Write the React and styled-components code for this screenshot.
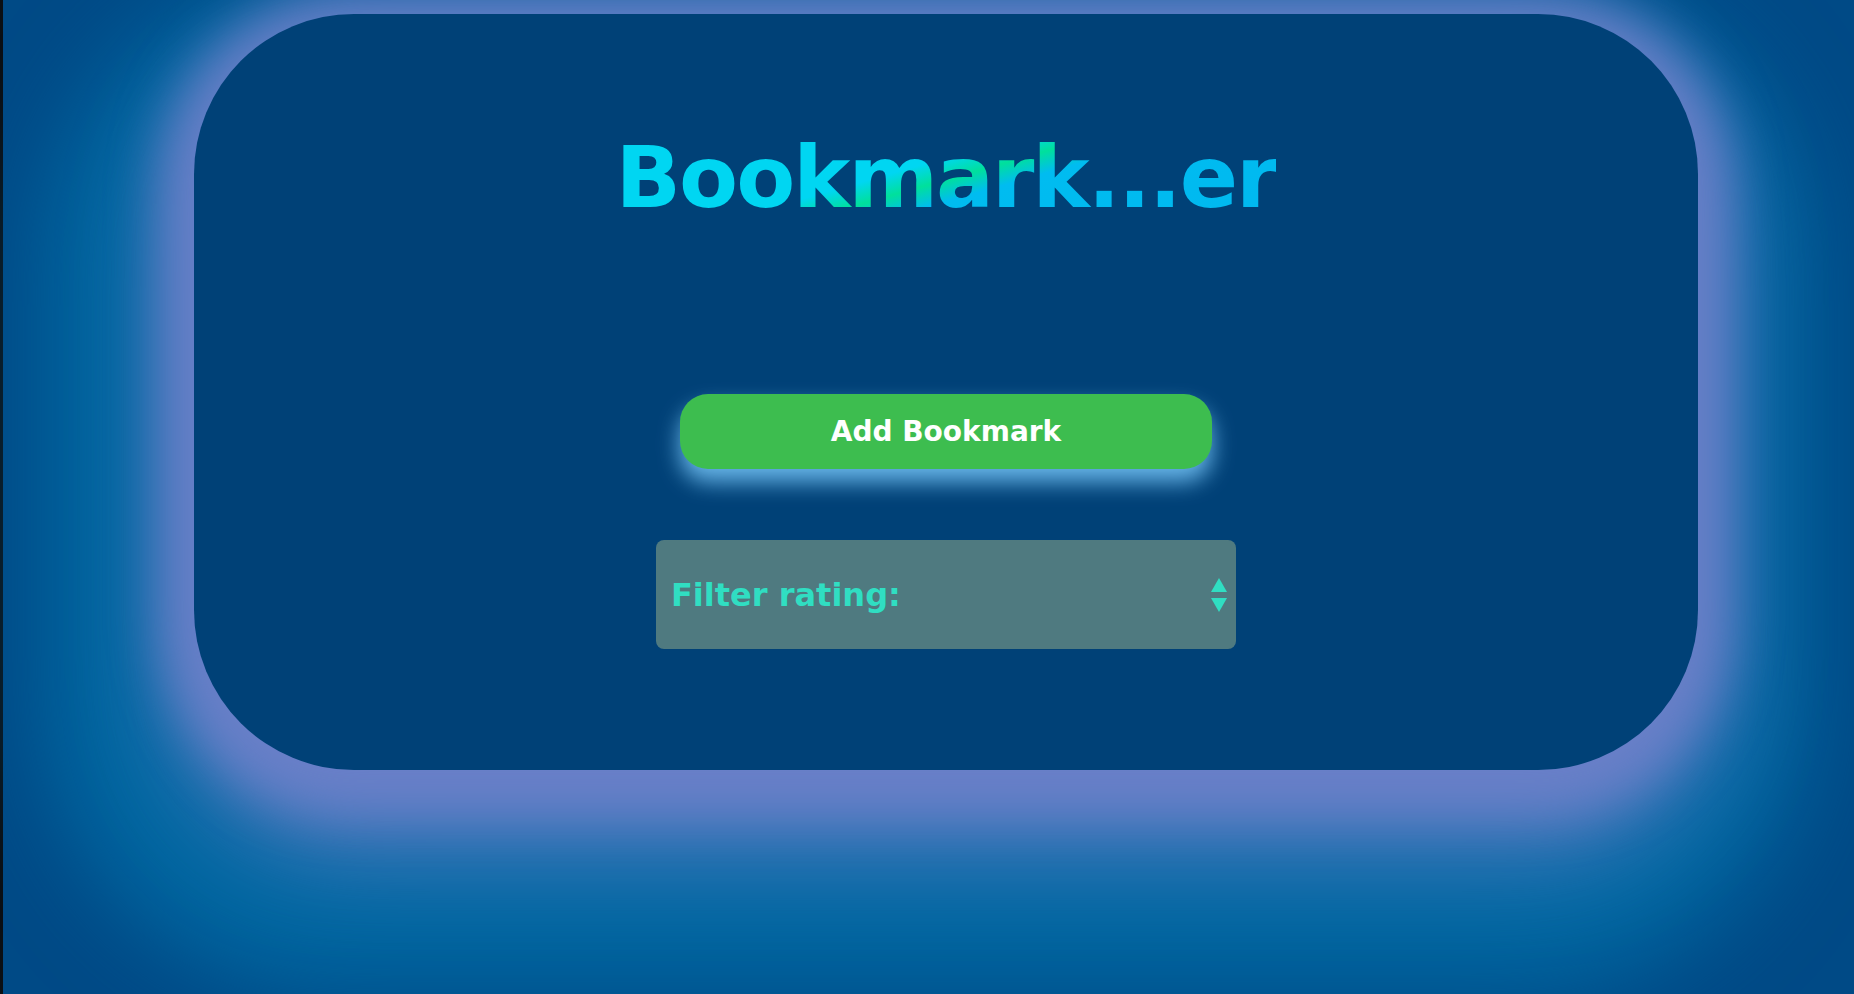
import React from "react";
import styled, { createGlobalStyle } from "styled-components";

const GlobalStyle = createGlobalStyle`
  html, body {
    margin: 0;
    padding: 0;
  }

  body {
    background: #004a86;
    font-family: "DejaVu Sans", "Liberation Sans", sans-serif;
    overflow: hidden;
  }
`;

const Page = styled.div`
  min-height: 100vh;
  box-sizing: border-box;
  border-left: 3px solid #0b0f14;
  padding: 14px 0 0 191px;
  background: #004a86;
`;

const Card = styled.main`
  width: 1504px;
  height: 756px;
  box-sizing: border-box;
  border-radius: 160px;
  background: #004177;
  padding-top: 120px;
  display: flex;
  flex-direction: column;
  align-items: center;
  box-shadow:
    0 10px 50px 32px rgba(106, 128, 200, 0.95),
    0 60px 100px 20px rgba(100, 128, 200, 0.85),
    -20px 90px 90px 130px #0068a2;
`;

const Title = styled.h1`
  margin: 0 0 174px;
  font-size: 86px;
  font-weight: 700;
  line-height: 1;
  letter-spacing: -2px;
  background: linear-gradient(
    164deg,
    #00d6f2 0%,
    #00d6f2 43%,
    #00e09c 51%,
    #00bcf0 59%,
    #00b8f0 100%
  );
  -webkit-background-clip: text;
  background-clip: text;
  color: transparent;
`;

const AddButton = styled.button`
  width: 532px;
  height: 75px;
  border: none;
  border-radius: 28px;
  background: #3dbd4f;
  color: #ffffff;
  font-family: inherit;
  font-size: 28px;
  font-weight: 700;
  cursor: pointer;
  margin-bottom: 71px;
  box-shadow: 0 13px 22px rgba(120, 200, 250, 0.85);
`;

const FilterSelect = styled.div`
  width: 580px;
  height: 109px;
  box-sizing: border-box;
  padding: 0 8px 0 15px;
  display: flex;
  align-items: center;
  justify-content: space-between;
  background: #4f7a80;
  border-radius: 8px;
  color: #30dec2;
  font-size: 32px;
  font-weight: 700;
`;

const Arrows = () => (
  <svg width="18" height="34" viewBox="0 0 18 34" aria-hidden="true">
    <polygon points="1,14 9,0 17,14" fill="#30dec2" />
    <polygon points="1,20 17,20 9,34" fill="#30dec2" />
  </svg>
);

const App = () => (
  <Page>
    <GlobalStyle />
    <Card>
      <Title>Bookmark...er</Title>
      <AddButton>Add Bookmark</AddButton>
      <FilterSelect role="listbox" aria-label="Filter rating">
        <span>Filter rating:</span>
        <Arrows />
      </FilterSelect>
    </Card>
  </Page>
);

export default App;
